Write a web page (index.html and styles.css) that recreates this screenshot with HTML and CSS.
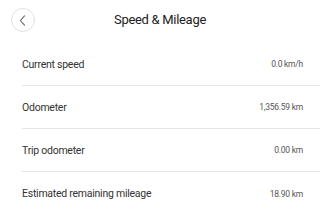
FILE: index.html
```html
<!DOCTYPE html>
<html>
<head>
<meta charset="utf-8">
<link rel="stylesheet" href="styles.css">
</head>
<body>
<div class="page">
  <header class="header">
    <button class="back" aria-label="Back">
      <svg width="7" height="11" viewBox="0 0 7 11"><path d="M5.5 0.8 L1.3 5.5 L5.5 10.2" fill="none" stroke="#666" stroke-width="1.1" stroke-linecap="round" stroke-linejoin="round"/></svg>
    </button>
    <h1 class="title">Speed &amp; Mileage</h1>
  </header>
  <ul class="list">
    <li class="row"><span class="label">Current speed</span><span class="value">0.0 km/h</span></li>
    <li class="row"><span class="label">Odometer</span><span class="value">1,356.59 km</span></li>
    <li class="row"><span class="label">Trip odometer</span><span class="value">0.00 km</span></li>
    <li class="row"><span class="label">Estimated remaining mileage</span><span class="value">18.90 km</span></li>
  </ul>
</div>
</body>
</html>
```
FILE: styles.css
```css
* { box-sizing: border-box; }
html, body { margin: 0; padding: 0; background: #fff; }
body { font-family: Roboto, "Noto Sans", sans-serif; color: #333; }
.page { width: 320px; }
.header {
  position: relative;
  height: 43px;
  display: flex;
  align-items: center;
  justify-content: center;
}
.back {
  position: absolute;
  left: 11px;
  top: 8px;
  width: 24px;
  height: 24px;
  border-radius: 50%;
  border: 1px solid #e2e2e2;
  background: #fff;
  padding: 0 1px 0 0;
  display: flex;
  align-items: center;
  justify-content: center;
}
.title {
  margin: 0;
  margin-top: -4px;
  font-size: 13px;
  letter-spacing: -0.3px;
  font-weight: 400;
  color: #222;
}
.list { list-style: none; margin: 0; padding: 0 0 0 22px; }
.row {
  height: 43px;
  display: flex;
  align-items: center;
  justify-content: space-between;
  padding-right: 17px;
  border-bottom: 1px solid #e6e6e6;
}
.row:last-child { border-bottom: none; }
.label { font-size: 10.5px; letter-spacing: -0.25px; color: #333; }
.value { font-size: 8.5px; letter-spacing: -0.25px; color: #555; }
```
